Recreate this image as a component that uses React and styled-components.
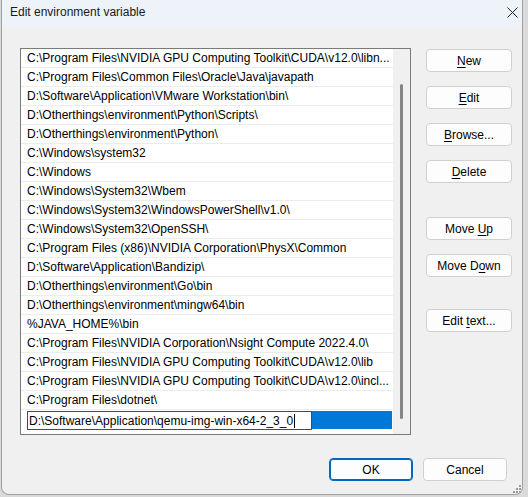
import React from "react";
import styled, { createGlobalStyle } from "styled-components";

const GlobalStyle = createGlobalStyle`
  html, body {
    margin: 0;
    padding: 0;
    background: #dadada;
  }
  body {
    font-family: "Segoe UI", "Liberation Sans", Arial, sans-serif;
    font-size: 12px;
    color: #000;
  }
`;

const Window = styled.div`
  position: relative;
  box-sizing: border-box;
  width: 522px;
  height: 495px;
  margin-left: 1px;
  border: 1px solid #a0a0a0;
  border-top: none;
  border-radius: 0 0 8px 8px;
  background: #f0f0f0;
  display: flex;
  flex-direction: column;
  overflow: hidden;
`;

const TitleBar = styled.div`
  box-sizing: border-box;
  height: 27px;
  flex: none;
  display: flex;
  align-items: center;
  justify-content: space-between;
  padding: 0 0 3px 8px;
  background: #eef3f9;
`;

const Title = styled.span`
  font-size: 12px;
  color: #1a1a1a;
`;

const CloseBox = styled.div`
  width: 20px;
  height: 20px;
  display: flex;
  align-items: center;
  justify-content: center;
`;

const Body = styled.div`
  display: flex;
  padding: 21px 10px 0 18px;
  gap: 15px;
`;

const ListBox = styled.div`
  box-sizing: border-box;
  width: 392px;
  height: 387px;
  border: 1px solid #7a7a7a;
  background: #fff;
  display: flex;
`;

const Rows = styled.div`
  flex: 1;
  display: flex;
  flex-direction: column;
  min-width: 0;
`;

const Row = styled.div`
  box-sizing: border-box;
  height: 19px;
  flex: none;
  display: flex;
  align-items: center;
  padding-left: 6px;
  border-bottom: 1px solid #ececec;
  white-space: nowrap;
  overflow: hidden;
`;

const EditRow = styled.div`
  height: 19px;
  flex: none;
  display: flex;
  padding: 1px 1px 0 6px;
`;

const EditBox = styled.div`
  box-sizing: border-box;
  width: 285px;
  height: 19px;
  border: 1px solid #4a4a4a;
  background: #fff;
  display: flex;
  align-items: center;
  padding-left: 1px;
  white-space: nowrap;
`;

const Caret = styled.span`
  display: inline-block;
  width: 1px;
  height: 14px;
  background: #000;
  margin-left: 1px;
`;

const Highlight = styled.div`
  flex: 1;
  height: 18px;
  background: #0078d7;
`;

const ScrollTrack = styled.div`
  width: 17px;
  flex: none;
  background: #f0f0f0;
  display: flex;
  justify-content: center;
  padding-top: 35px;
  box-sizing: border-box;
`;

const ScrollThumb = styled.div`
  width: 3px;
  height: 335px;
  border-radius: 2px;
  background: #858585;
`;

const ButtonColumn = styled.div`
  display: flex;
  flex-direction: column;
  padding-top: 1px;
`;

const Button = styled.button`
  box-sizing: border-box;
  width: ${(p) => p.w || 86}px;
  height: 23px;
  margin-top: ${(p) => p.gap ?? 14}px;
  padding: 0;
  border: 1px solid ${(p) => (p.primary ? "#0067c0" : "#d0d0d0")};
  box-shadow: ${(p) => (p.primary ? "inset 0 0 0 1px #0067c0" : "none")};
  border-radius: 4px;
  background: #fdfdfd;
  font-family: inherit;
  font-size: 12px;
  color: #000;
  display: flex;
  align-items: center;
  justify-content: center;

  u {
    text-decoration: underline;
    text-underline-offset: 2px;
  }
`;

const Footer = styled.div`
  display: flex;
  justify-content: flex-end;
  gap: 10px;
  padding: 23px 15px 0 0;
`;

const Grip = styled.svg`
  position: absolute;
  right: 1px;
  bottom: 1px;
`;

const paths = [
  "C:\\Program Files\\NVIDIA GPU Computing Toolkit\\CUDA\\v12.0\\libn...",
  "C:\\Program Files\\Common Files\\Oracle\\Java\\javapath",
  "D:\\Software\\Application\\VMware Workstation\\bin\\",
  "D:\\Otherthings\\environment\\Python\\Scripts\\",
  "D:\\Otherthings\\environment\\Python\\",
  "C:\\Windows\\system32",
  "C:\\Windows",
  "C:\\Windows\\System32\\Wbem",
  "C:\\Windows\\System32\\WindowsPowerShell\\v1.0\\",
  "C:\\Windows\\System32\\OpenSSH\\",
  "C:\\Program Files (x86)\\NVIDIA Corporation\\PhysX\\Common",
  "D:\\Software\\Application\\Bandizip\\",
  "D:\\Otherthings\\environment\\Go\\bin",
  "D:\\Otherthings\\environment\\mingw64\\bin",
  "%JAVA_HOME%\\bin",
  "C:\\Program Files\\NVIDIA Corporation\\Nsight Compute 2022.4.0\\",
  "C:\\Program Files\\NVIDIA GPU Computing Toolkit\\CUDA\\v12.0\\lib",
  "C:\\Program Files\\NVIDIA GPU Computing Toolkit\\CUDA\\v12.0\\incl...",
  "C:\\Program Files\\dotnet\\",
];

export default function App() {
  return (
    <>
      <GlobalStyle />
      <Window>
        <TitleBar>
          <Title>Edit environment variable</Title>
          <CloseBox>
            <svg width="11" height="11" viewBox="0 0 11 11">
              <path d="M0.5 0.5 L10.5 10.5 M10.5 0.5 L0.5 10.5" stroke="#222" strokeWidth="1" />
            </svg>
          </CloseBox>
        </TitleBar>

        <Body>
          <ListBox>
            <Rows>
              {paths.map((p) => (
                <Row key={p}>{p}</Row>
              ))}
              <EditRow>
                <EditBox>
                  D:\Software\Application\qemu-img-win-x64-2_3_0
                  <Caret />
                </EditBox>
                <Highlight />
              </EditRow>
            </Rows>
            <ScrollTrack>
              <ScrollThumb />
            </ScrollTrack>
          </ListBox>

          <ButtonColumn>
            <Button gap={0}><u>N</u>ew</Button>
            <Button><u>E</u>dit</Button>
            <Button><u>B</u>rowse...</Button>
            <Button><u>D</u>elete</Button>
            <Button gap={34}>Move&nbsp;<u>U</u>p</Button>
            <Button>Move D<u>o</u>wn</Button>
            <Button gap={32}>Edit&nbsp;<u>t</u>ext...</Button>
          </ButtonColumn>
        </Body>

        <Footer>
          <Button primary w={84} gap={0}>OK</Button>
          <Button w={84} gap={0}>Cancel</Button>
        </Footer>

        <Grip width="8" height="8" viewBox="0 0 8 8">
          <g fill="#9a9a9a">
            <rect x="6" y="0" width="2" height="2" />
            <rect x="3" y="3" width="2" height="2" />
            <rect x="6" y="3" width="2" height="2" />
            <rect x="0" y="6" width="2" height="2" />
            <rect x="3" y="6" width="2" height="2" />
            <rect x="6" y="6" width="2" height="2" />
          </g>
        </Grip>
      </Window>
    </>
  );
}
